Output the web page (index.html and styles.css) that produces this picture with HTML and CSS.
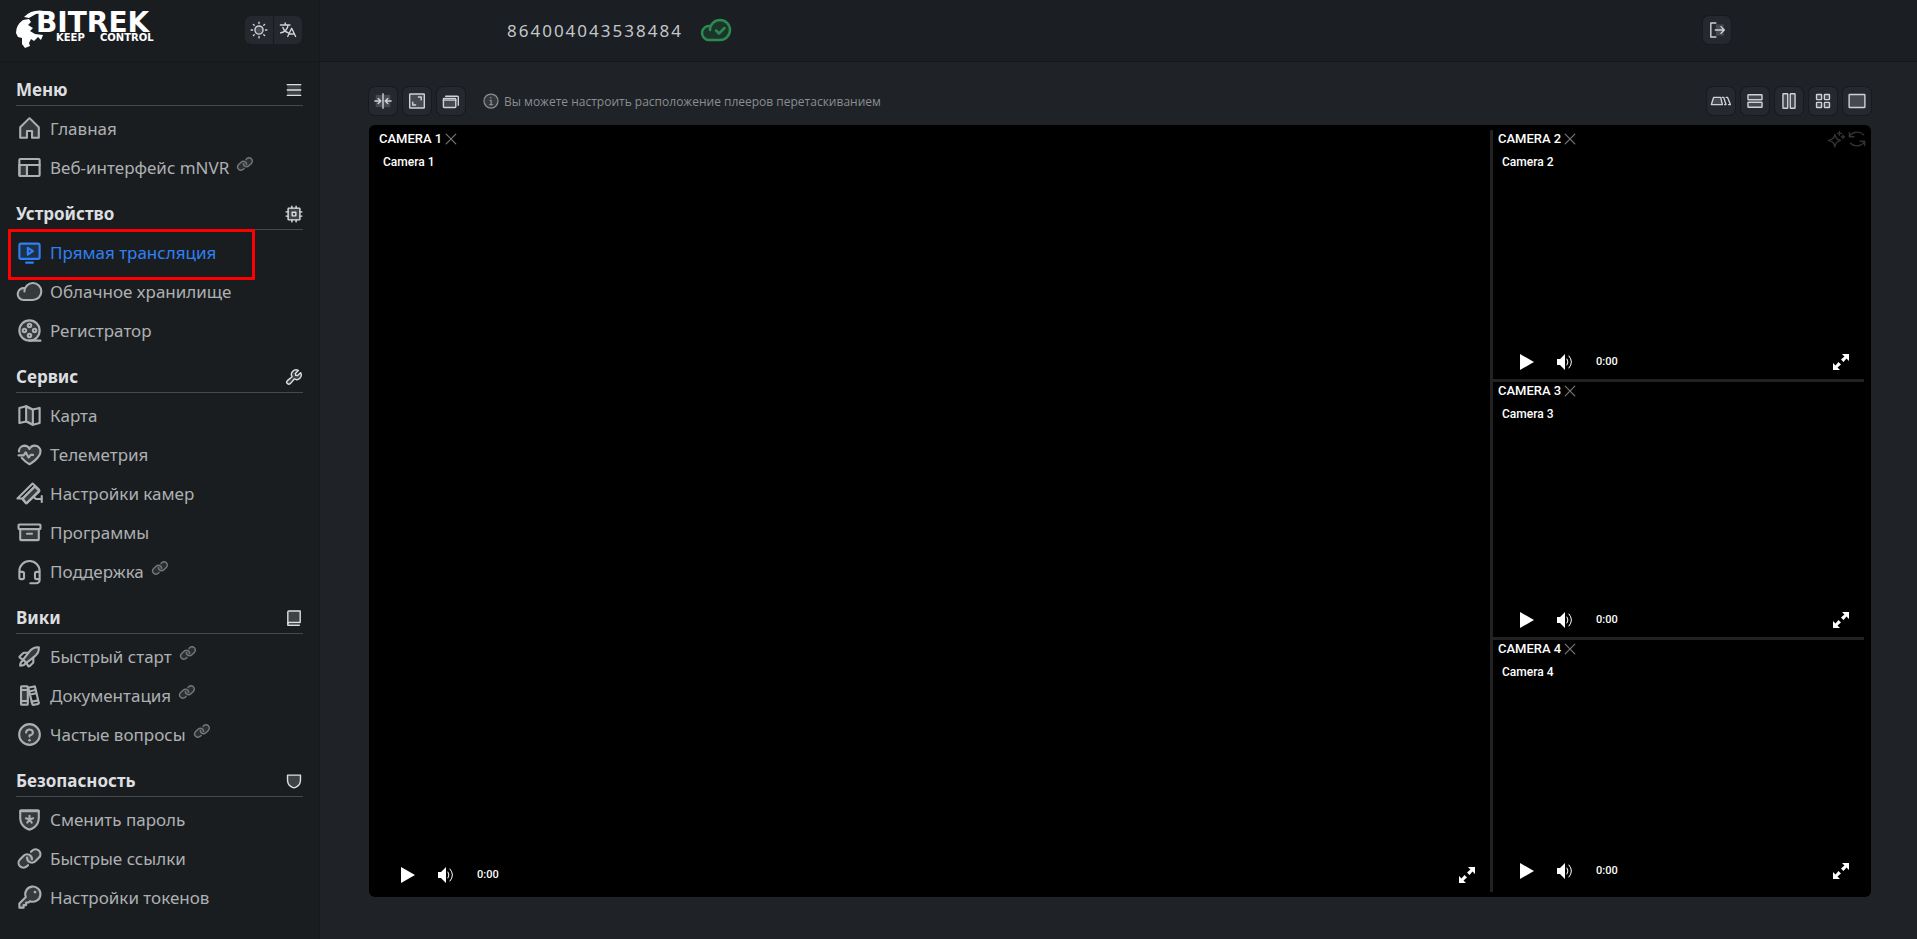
FILE: index.html
```html
<!DOCTYPE html>
<html lang="ru">
<head>
<meta charset="utf-8">
<title>Bitrek – Прямая трансляция</title>
<link rel="stylesheet" href="styles.css">
</head>
<body>
<svg class="sprite" aria-hidden="true">
  <symbol id="house" viewBox="0 0 256 256"><path class="tint" d="M104,216V152h48v64h64V120a8,8,0,0,0-2.34-5.66l-80-80a8,8,0,0,0-11.32,0l-80,80A8,8,0,0,0,40,120v96Z"/></symbol>
  <symbol id="layout" viewBox="0 0 256 256"><path class="tint" d="M104,104V208H40a8,8,0,0,1-8-8V104Z"/><rect x="32" y="48" width="192" height="160" rx="8"/><path d="M32,104H224M104,104V208"/></symbol>
  <symbol id="link" viewBox="0 0 256 256"><path class="tint" d="M141.38,64.68l11-11a46.62,46.62,0,0,1,65.94,0h0a46.62,46.62,0,0,1,0,65.94L183.6,154.34a46.63,46.63,0,0,1-66-.05h0A46.48,46.48,0,0,1,104,120.06"/><path class="tint" d="M114.62,191.32l-11,11a46.63,46.63,0,0,1-66-.05h0a46.63,46.63,0,0,1,.06-65.89L72.4,101.66a46.62,46.62,0,0,1,65.94,0h0A46.45,46.45,0,0,1,152,135.94"/></symbol>
  <symbol id="monitor" viewBox="0 0 256 256"><rect class="tint" x="32" y="44" width="192" height="144" rx="16"/><path d="M160,224H96M112,84l48,32-48,32Z"/></symbol>
  <symbol id="cloud" viewBox="0 0 256 256"><path class="tint" d="M80,128a80,80,0,1,1,80,80H72A56,56,0,1,1,85.92,97.74"/></symbol>
  <symbol id="cloud-check" viewBox="0 0 256 256"><path class="tint" d="M80,128a80,80,0,1,1,80,80H72A56,56,0,1,1,85.92,97.74"/><path d="M196,112l-44,44-24-24"/></symbol>
  <symbol id="reel" viewBox="0 0 256 256"><circle class="tint" cx="128" cy="128" r="96"/><circle cx="128" cy="80" r="16"/><circle cx="128" cy="176" r="16"/><circle cx="80" cy="128" r="16"/><circle cx="176" cy="128" r="16"/><path d="M128,224H232"/></symbol>
  <symbol id="map" viewBox="0 0 256 256"><path class="tint" d="M96,40l64,32V216L96,184Z"/><path d="M96,184,32,200V56L96,40l64,32,64-16V200l-64,16Z"/></symbol>
  <symbol id="heart" viewBox="0 0 256 256"><path class="tint" d="M28,100V98A54,54,0,0,1,78,44c22.59,0,41.94,12.31,50,32,8.06-19.69,27.41-32,50-32a54,54,0,0,1,54,54C232,164,128,220,128,220S84,196,54,160"/><path d="M24,136H72l20-28,28,48,20-24h22"/></symbol>
  <symbol id="camera" viewBox="0 0 256 256"><path class="tint" d="M64,176,178,62l40,38a8,8,0,0,1,0,11L104,219a8,8,0,0,1-11,0Z"/><path d="M64,176H14L152,38a8,8,0,0,1,11,0l55,52a8,8,0,0,1,0,12L104,216a8,8,0,0,1-11,0L55,176M182,58,64,176M164,156l22,22a8,8,0,0,0,6,2H244M244,152v56"/></symbol>
  <symbol id="archive" viewBox="0 0 256 256"><path class="tint" d="M216,96v96a8,8,0,0,1-8,8H48a8,8,0,0,1-8-8V96"/><rect x="24" y="52" width="208" height="44" rx="8"/><path d="M104,140h48"/></symbol>
  <symbol id="headset" viewBox="0 0 256 256"><path d="M224,132H196a16,16,0,0,0-16,16v36a16,16,0,0,0,16,16h28V124a96,96,0,0,0-192,0v60a16,16,0,0,0,16,16H60a16,16,0,0,0,16-16V148a16,16,0,0,0-16-16H32M224,196v12a32,32,0,0,1-32,32H136"/></symbol>
  <symbol id="rocket" viewBox="0 0 256 256"><path class="tint" d="M98,188,68,158l56-74c26-34,60-46,92-44,4,34-10,66-44,92Z"/><path d="M118,92H75a8,8,0,0,0-6,2L35,128a8,8,0,0,0,4,13l29,17M164,138v43a8,8,0,0,1-2,6l-34,34a8,8,0,0,1-13-4L98,188M92,188c-8,18-26,28-52,28,0-26,10-42,26-50"/></symbol>
  <symbol id="books" viewBox="0 0 256 256"><rect class="tint" x="48" y="40" width="64" height="176" rx="8"/><path d="M48,76h64M48,180h64M118,62a8,8,0,0,1,6-10l48-10a8,8,0,0,1,9,6l35,150a8,8,0,0,1-6,10l-46,9a8,8,0,0,1-9-6ZM122,90l64-14M128,120l62-14M146,188l64-14"/></symbol>
  <symbol id="question" viewBox="0 0 256 256"><circle class="tint" cx="128" cy="128" r="98"/><circle class="dot" cx="128" cy="182" r="12"/><path d="M128,148v-12c17.67,0,32-12.54,32-28s-14.33-28-32-28S96,92.54,96,108v2"/></symbol>
  <symbol id="shield-star" viewBox="0 0 256 256"><path class="tint" d="M216,112V48a8,8,0,0,0-8-8H48a8,8,0,0,0-8,8v64c0,92,88,112,88,112S216,204,216,112Z"/><path d="M40,50H216M128,128V92M128,128l-34-11M128,128l-21,29M128,128l21,29M128,128l34-11"/></symbol>
  <symbol id="shield" viewBox="0 0 256 256"><path class="tint" d="M220,112V44H36v68c0,96,92,114,92,114S220,208,220,112Z"/></symbol>
  <symbol id="key" viewBox="0 0 256 256"><path class="tint" d="M93,123a72,72,0,1,1,40,40l-13,13H96v24H72v24H32V184Z"/><circle class="dot" cx="180" cy="76" r="13"/></symbol>
  <symbol id="list" viewBox="0 0 256 256"><path class="tint flat" d="M32,52H224V204H32Z"/><path d="M32,52H224M32,128H224M32,204H224"/></symbol>
  <symbol id="cpu" viewBox="0 0 256 256"><rect class="tint" x="44" y="44" width="168" height="168" rx="10"/><rect x="102" y="102" width="52" height="52"/><path d="M98,16V44M158,16V44M98,212v28M158,212v28M16,98H44M16,158H44M212,98h28M212,158h28"/></symbol>
  <symbol id="wrench" viewBox="0 0 256 256"><path class="tint" d="M222,66l-44,42-26-4-4-26,42-44A66,66,0,0,0,100,124L34,180a29,29,0,0,0,42,42l56-66A66,66,0,0,0,222,66Z"/></symbol>
  <symbol id="book" viewBox="0 0 256 256"><path class="tint" d="M40,208V44a16,16,0,0,1,16-16H216V192H56a16,16,0,0,0-16,16Z"/><path d="M40,204v28H204"/></symbol>
  <symbol id="sun" viewBox="0 0 256 256"><circle class="tint" cx="128" cy="128" r="58"/><path d="M128,36V16M128,240V220M36,128H16M240,128H220M60,60,48,48M196,60l12-12M60,196,48,208M196,196l12,12"/></symbol>
  <symbol id="translate" viewBox="0 0 256 256"><path d="M124,220,180,104l56,116M142,184h76M20,56H156M88,28V56M128,56c0,50-44,104-104,112M56,92c12,40,46,66,78,76"/></symbol>
  <symbol id="exit" viewBox="0 0 256 256"><path class="tint flat" d="M112,48H224V208H112Z"/><path d="M112,28H40V228h72M104,128H232M184,80l48,48-48,48"/></symbol>
  <symbol id="merge" viewBox="0 0 256 256"><path class="tint flat" d="M24,40H232V216H24Z"/><path d="M128,24V232M12,128H92M60,92l36,36L60,164M244,128H164M196,92l-36,36,36,36"/></symbol>
  <symbol id="frame" viewBox="0 0 256 256"><rect class="tint" x="24" y="28" width="208" height="200" rx="8"/><path d="M148,72h40v40M108,184H68V144"/></symbol>
  <symbol id="stack" viewBox="0 0 256 256"><rect class="tint" x="20" y="92" width="176" height="128" rx="10"/><path d="M52,60H220a12,12,0,0,1,12,12V188M20,116H196"/></symbol>
  <symbol id="perspective" viewBox="0 0 320 256"><path class="tint" d="M52,76H156l24,104H20Z"/><path d="M180,76h20l32,104H212M236,76h20l40,104H270"/></symbol>
  <symbol id="rows" viewBox="0 0 256 256"><rect class="tint" x="28" y="40" width="200" height="70" rx="8"/><rect class="tint" x="28" y="146" width="200" height="70" rx="8"/></symbol>
  <symbol id="columns" viewBox="0 0 256 256"><rect class="tint" x="42" y="24" width="68" height="208" rx="8"/><rect class="tint" x="146" y="24" width="68" height="208" rx="8"/></symbol>
  <symbol id="grid" viewBox="0 0 256 256"><rect class="tint" x="36" y="36" width="72" height="72" rx="8"/><rect class="tint" x="148" y="36" width="72" height="72" rx="8"/><rect class="tint" x="36" y="148" width="72" height="72" rx="8"/><rect class="tint" x="148" y="148" width="72" height="72" rx="8"/></symbol>
  <symbol id="single" viewBox="0 0 256 256"><rect class="tint" x="16" y="36" width="224" height="184" rx="8"/></symbol>
  <symbol id="info" viewBox="0 0 256 256"><circle class="tint" cx="128" cy="128" r="112"/><circle class="dot" cx="124" cy="76" r="13"/><path d="M112,116h18v68M108,184h44"/></symbol>
  <symbol id="close" viewBox="0 0 10 10"><path d="M1,1 9,9M9,1 1,9"/></symbol>
  <symbol id="sparkle" viewBox="0 0 256 256"><path d="M112,64c12,52,22,62,80,84-58,22-68,32-80,92-12-60-22-70-92-92,70-22,80-32,92-84ZM176,20V76M148,48h56M228,72v48M204,96h48"/></symbol>
  <symbol id="refresh" viewBox="0 0 256 256"><path d="M20,36V96H84M24,92C52,28,160,4,220,68M236,220V160H172M232,164C204,228,96,252,36,188"/></symbol>
  <symbol id="play" viewBox="0 0 14 16"><path class="dot" d="M0,0 14,8 0,16Z"/></symbol>
  <symbol id="volume" viewBox="0 0 16 16"><path class="dot" d="M0,5H3L8,0V16L3,11H0Z"/><path d="M10,5q2,3 0,6M12,2q5,6 0,12"/></symbol>
  <symbol id="expand" viewBox="0 0 16 16"><path class="dot" d="M9,0H16V7L13.5,4.500 10.500,8 8,5.500 11.500,2.500ZM7,16H0V9L2.500,11.500 5.500,8 8,10.500 4.500,13.500Z"/></symbol>
</svg>

<div class="app">
  <aside class="sidebar">
    <div class="brand">
      <a href="#" class="logo" aria-label="BITREK KEEP CONTROL">
        <svg width="142" height="40" viewBox="0 0 142 40">
          <path fill="#fff" d="M8,7Q16,-1 28,1L37,4 28,3 20,4 13,8ZM0,23Q0,15 7,10L13,9 15,12 12,15 17,18 14,21 19,24 27,25 25,30 22,27 18,31 15,29 13,33 14,36 9,38 6,34 6,28 2,27Z"/>
          <text class="logo-name" x="20" y="22">BITREK</text>
          <text class="logo-tag" x="40" y="31">KEEP</text>
          <text class="logo-tag" x="84" y="31">CONTROL</text>
        </svg>
      </a>
      <div class="button-group">
        <button class="tool" aria-label="Тема"><svg><use href="#sun"/></svg></button>
        <button class="tool" aria-label="Язык"><svg><use href="#translate"/></svg></button>
      </div>
    </div>
    <nav class="nav">
      <h2 class="nav-title">Меню<svg><use href="#list"/></svg></h2>
      <a class="nav-link" href="#"><svg><use href="#house"/></svg>Главная</a>
      <a class="nav-link" href="#"><svg><use href="#layout"/></svg>Веб-интерфейс mNVR<svg class="external"><use href="#link"/></svg></a>

      <h2 class="nav-title">Устройство<svg><use href="#cpu"/></svg></h2>
      <a class="nav-link active" href="#"><svg><use href="#monitor"/></svg>Прямая трансляция<span class="marker"></span></a>
      <a class="nav-link" href="#"><svg><use href="#cloud"/></svg>Облачное хранилище</a>
      <a class="nav-link" href="#"><svg><use href="#reel"/></svg>Регистратор</a>

      <h2 class="nav-title">Сервис<svg><use href="#wrench"/></svg></h2>
      <a class="nav-link" href="#"><svg><use href="#map"/></svg>Карта</a>
      <a class="nav-link" href="#"><svg><use href="#heart"/></svg>Телеметрия</a>
      <a class="nav-link" href="#"><svg><use href="#camera"/></svg>Настройки камер</a>
      <a class="nav-link" href="#"><svg><use href="#archive"/></svg>Программы</a>
      <a class="nav-link" href="#"><svg><use href="#headset"/></svg>Поддержка<svg class="external"><use href="#link"/></svg></a>

      <h2 class="nav-title">Вики<svg><use href="#book"/></svg></h2>
      <a class="nav-link" href="#"><svg><use href="#rocket"/></svg>Быстрый старт<svg class="external"><use href="#link"/></svg></a>
      <a class="nav-link" href="#"><svg><use href="#books"/></svg>Документация<svg class="external"><use href="#link"/></svg></a>
      <a class="nav-link" href="#"><svg><use href="#question"/></svg>Частые вопросы<svg class="external"><use href="#link"/></svg></a>

      <h2 class="nav-title">Безопасность<svg><use href="#shield"/></svg></h2>
      <a class="nav-link" href="#"><svg><use href="#shield-star"/></svg>Сменить пароль</a>
      <a class="nav-link" href="#"><svg><use href="#link"/></svg>Быстрые ссылки</a>
      <a class="nav-link" href="#"><svg><use href="#key"/></svg>Настройки токенов</a>
    </nav>
  </aside>

  <div class="page">
    <header class="topbar">
      <span class="device-id">864004043538484</span>
      <svg class="status"><use href="#cloud-check"/></svg>
      <button class="tool logout" aria-label="Выйти"><svg><use href="#exit"/></svg></button>
    </header>
    <main class="content">
      <div class="toolbar">
        <button class="tool" aria-label="Сжать"><svg><use href="#merge"/></svg></button>
        <button class="tool" aria-label="Во весь экран"><svg><use href="#frame"/></svg></button>
        <button class="tool" aria-label="Окна"><svg><use href="#stack"/></svg></button>
        <p class="hint"><svg><use href="#info"/></svg>Вы можете настроить расположение плееров перетаскиванием</p>
        <button class="tool" aria-label="Перспектива"><svg class="wide"><use href="#perspective"/></svg></button>
        <button class="tool" aria-label="Строки"><svg><use href="#rows"/></svg></button>
        <button class="tool" aria-label="Столбцы"><svg><use href="#columns"/></svg></button>
        <button class="tool" aria-label="Сетка"><svg><use href="#grid"/></svg></button>
        <button class="tool" aria-label="Один"><svg><use href="#single"/></svg></button>
      </div>
      <section class="players">
        <article class="player main-player">
          <h3 class="player-tab">CAMERA 1<button aria-label="Закрыть"><svg><use href="#close"/></svg></button></h3>
          <p class="player-name">Camera 1</p>
          <div class="controls">
            <button aria-label="Воспроизвести"><svg class="play"><use href="#play"/></svg></button>
            <button aria-label="Звук"><svg><use href="#volume"/></svg></button>
            <span class="time">0:00</span>
            <button class="expand" aria-label="Развернуть"><svg><use href="#expand"/></svg></button>
          </div>
        </article>
        <div class="side-players">
          <article class="player">
            <h3 class="player-tab">CAMERA 2<button aria-label="Закрыть"><svg><use href="#close"/></svg></button></h3>
            <p class="player-name">Camera 2</p>
            <div class="controls">
              <button aria-label="Воспроизвести"><svg class="play"><use href="#play"/></svg></button>
              <button aria-label="Звук"><svg><use href="#volume"/></svg></button>
              <span class="time">0:00</span>
              <button class="expand" aria-label="Развернуть"><svg><use href="#expand"/></svg></button>
            </div>
          </article>
          <article class="player">
            <h3 class="player-tab">CAMERA 3<button aria-label="Закрыть"><svg><use href="#close"/></svg></button></h3>
            <p class="player-name">Camera 3</p>
            <div class="controls">
              <button aria-label="Воспроизвести"><svg class="play"><use href="#play"/></svg></button>
              <button aria-label="Звук"><svg><use href="#volume"/></svg></button>
              <span class="time">0:00</span>
              <button class="expand" aria-label="Развернуть"><svg><use href="#expand"/></svg></button>
            </div>
          </article>
          <article class="player last">
            <h3 class="player-tab">CAMERA 4<button aria-label="Закрыть"><svg><use href="#close"/></svg></button></h3>
            <p class="player-name">Camera 4</p>
            <div class="controls">
              <button aria-label="Воспроизвести"><svg class="play"><use href="#play"/></svg></button>
              <button aria-label="Звук"><svg><use href="#volume"/></svg></button>
              <span class="time">0:00</span>
              <button class="expand" aria-label="Развернуть"><svg><use href="#expand"/></svg></button>
            </div>
          </article>
        </div>
        <div class="overlay">
          <button aria-label="Улучшить"><svg><use href="#sparkle"/></svg></button>
          <button aria-label="Обновить"><svg><use href="#refresh"/></svg></button>
        </div>
      </section>
    </main>
  </div>
</div>
</body>
</html>
```

FILE: styles.css
```css
* {
  box-sizing: border-box;
}

body {
  margin: 0;
  background: #1f2226;
  color: #adb0b3;
  font-family: "Noto Sans", "Open Sans", sans-serif;
  font-size: 17px;
}

h2, h3, p {
  margin: 0;
}

button {
  display: flex;
  align-items: center;
  justify-content: center;
  padding: 0;
  border: 0;
  background: none;
  color: inherit;
  font: inherit;
}

.sprite {
  display: none;
}

svg {
  flex: none;
  fill: none;
  stroke: currentColor;
  stroke-width: 20px;
  stroke-linecap: round;
  stroke-linejoin: round;
}

.tint {
  fill: currentColor;
  fill-opacity: 0.2;
}

.flat {
  stroke: none;
}

.dot {
  fill: currentColor;
  stroke: none;
}

.app {
  display: grid;
  grid-template-columns: 320px 1fr;
  min-height: 100vh;
}

.sidebar {
  background: #1a1d1f;
  border-right: 1px solid #16181b;
}

.brand {
  display: flex;
  align-items: center;
  justify-content: space-between;
  height: 62px;
  padding: 0 17px 1px 16px;
  border-bottom: 1px solid #15171a;
}

.logo svg {
  display: block;
  overflow: visible;
  stroke: none;
}

.logo text {
  fill: #fff;
  font-family: "DejaVu Sans", sans-serif;
  font-weight: 700;
}

.logo-name {
  font-size: 28px;
}

.logo-tag {
  font-size: 10px;
}

.button-group {
  display: flex;
  gap: 1px;
  background: #15171a;
  border-radius: 6px;
  overflow: hidden;
}

.tool {
  width: 28px;
  height: 28px;
  border-radius: 6px;
  background: #25282e;
  box-shadow: 0 0 0 1px #181a1e;
  color: #cfd1d4;
}

.button-group .tool {
  border-radius: 0;
}

.tool svg {
  width: 18px;
  height: 18px;
}

.tool .wide {
  width: 22px;
}

.nav {
  padding: 1px 16px 8px;
}

.nav-title {
  display: flex;
  align-items: center;
  justify-content: space-between;
  height: 43px;
  margin-bottom: 3px;
  padding-top: 12px;
  border-bottom: 1px solid #46494c;
  color: #dcdee0;
  font-size: 17px;
  font-weight: 700;
  line-height: 24px;
}

.nav-title svg {
  width: 18px;
  height: 18px;
}

.nav-link {
  position: relative;
  display: flex;
  align-items: center;
  height: 39px;
  gap: 7px;
  color: #adb0b3;
  text-decoration: none;
}

.nav-link svg {
  width: 27px;
  height: 27px;
}

.nav-link .external {
  width: 18px;
  height: 25px;
  padding-bottom: 7px;
  color: #74777a;
}

.nav-link.active {
  color: #2f80f5;
}

.marker {
  position: absolute;
  top: -4px;
  left: -8px;
  width: 247px;
  height: 51px;
  border: 3px solid #f00;
  border-radius: 1px;
}

.page {
  display: flex;
  flex-direction: column;
}

.topbar {
  display: flex;
  align-items: center;
  height: 62px;
  padding: 0 186px 1px 187px;
  border-bottom: 1px solid #16191c;
  background: #1b1e22;
}

.device-id {
  color: #c4c7ca;
  letter-spacing: 2px;
}

.status {
  width: 32px;
  height: 32px;
  margin-left: 17px;
  color: #2a8a52;
}

.logout {
  margin-left: auto;
}

.content {
  display: flex;
  flex: 1;
  flex-direction: column;
  padding: 25px 46px 42px 49px;
}

.toolbar {
  display: flex;
  align-items: center;
  gap: 6px;
  margin-bottom: 10px;
}

.hint {
  display: flex;
  flex: 1;
  align-items: center;
  gap: 5px;
  padding-left: 12px;
  color: #8b8e92;
  font-family: "Open Sans", sans-serif;
  font-size: 12px;
}

.hint svg {
  width: 16px;
  height: 16px;
}

.players {
  position: relative;
  display: grid;
  flex: 1;
  grid-template-columns: 1116fr 374fr;
  padding: 5px 7px 5px 5px;
  border-radius: 6px;
  background: #000;
  color: #fff;
  font-family: Roboto, sans-serif;
}

.player {
  display: flex;
  flex-direction: column;
}

.side-players {
  display: grid;
  grid-template-rows: 252fr 258fr 252fr;
  border-left: 3px solid #222;
}

.side-players .player {
  border-bottom: 3px solid #222;
}

.side-players .last {
  padding-bottom: 4px;
  border-bottom: 0;
}

.player-tab {
  display: flex;
  align-items: center;
  gap: 3px;
  padding-left: 5px;
  font-size: 13px;
  font-weight: 500;
  line-height: 18px;
}

.player-tab svg {
  width: 12px;
  height: 12px;
  color: #777;
  stroke-width: 1px;
}

.player-name {
  padding: 6px 9px;
  font-size: 12px;
  font-weight: 500;
  line-height: 16px;
}

.controls {
  display: flex;
  align-items: center;
  gap: 23px;
  height: 34px;
  margin-top: auto;
  padding: 0 15px 0 27px;
}

.controls svg {
  width: 16px;
  height: 16px;
  stroke-width: 1px;
}

.controls .play {
  width: 14px;
}

.time {
  padding-bottom: 2px;
  font-size: 11px;
  font-weight: 500;
}

.expand {
  margin-left: auto;
}

.overlay {
  position: absolute;
  top: 5px;
  right: 5px;
  display: flex;
  gap: 3px;
  color: #333;
}

.overlay svg {
  width: 18px;
  height: 18px;
}
```
